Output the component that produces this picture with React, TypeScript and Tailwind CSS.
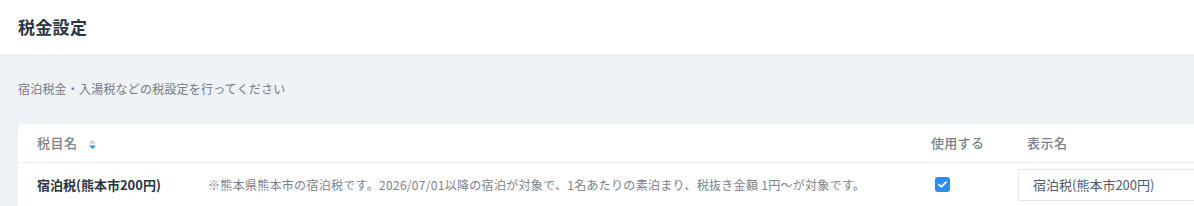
import React from 'react';

const font = { fontFamily: '"Noto Sans CJK JP", "Noto Sans", sans-serif' };

const App: React.FC = () => {
  return (
    <div className="min-h-screen w-[1194px] overflow-hidden bg-[#eef1f5]" style={font}>
      {/* Header */}
      <header className="h-[54px] bg-white flex items-center px-[18px]">
        <h1 className="text-[17px] font-bold text-[#2c3543] tracking-[0.3px]">税金設定</h1>
      </header>

      <main className="pl-[18px]">
        <p className="pt-[26px] text-[12px] text-[#737b87] leading-[18px] tracking-[0.2px]">
          宿泊税金・入湯税などの税設定を行ってください
        </p>

        {/* Table card */}
        <div className="mt-[26px] w-[1200px] bg-white rounded-tl-[5px]">
          <div className="h-[39px] flex items-center border-b border-[#ebeef2] text-[13px] text-[#7a818c] font-medium">
            <div className="w-[893px] pl-[19px] flex items-center gap-[11px]">
              <span className="tracking-[0.5px]">税目名</span>
              <svg width="7" height="9" viewBox="0 0 7 9" className="mt-[2px]">
                <path d="M3.5 0 L7 3.5 H0 Z" fill="#c5c8ce" />
                <path d="M3.5 9 L7 5.5 H0 Z" fill="#2d8cf0" />
              </svg>
            </div>
            <div className="w-[96px] pl-[20px] tracking-[0.3px]">使用する</div>
            <div className="pl-[20px] tracking-[0.5px]">表示名</div>
          </div>

          <div className="h-[43px] flex items-center">
            <div className="w-[190px] pl-[19px] text-[13px] font-bold text-[#2c3543]">
              宿泊税(熊本市200円)
            </div>
            <div className="w-[723px] text-[12px] text-[#7a818c] tracking-[0.3px]">
              ※熊本県熊本市の宿泊税です。2026/07/01以降の宿泊が対象で、1名あたりの素泊まり、税抜き金額 1円～が対象です。
            </div>
            <div className="w-[87px] pl-[4px] flex items-center">
              <span className="w-[15px] h-[15px] rounded-[3px] bg-[#2d8cf0] flex items-center justify-center">
                <svg width="9" height="7" viewBox="0 0 9 7">
                  <path d="M1 3.6 L3.4 5.8 L8 1.2" stroke="white" strokeWidth="1.8" fill="none" strokeLinecap="round" strokeLinejoin="round" />
                </svg>
              </span>
            </div>
            <div className="h-[32px] w-[200px] border border-[#e3e6eb] rounded-[2px] flex items-center pl-[14px] text-[13px] text-[#515a6e]">
              宿泊税(熊本市200円)
            </div>
          </div>
        </div>
      </main>
    </div>
  );
};

export default App;
